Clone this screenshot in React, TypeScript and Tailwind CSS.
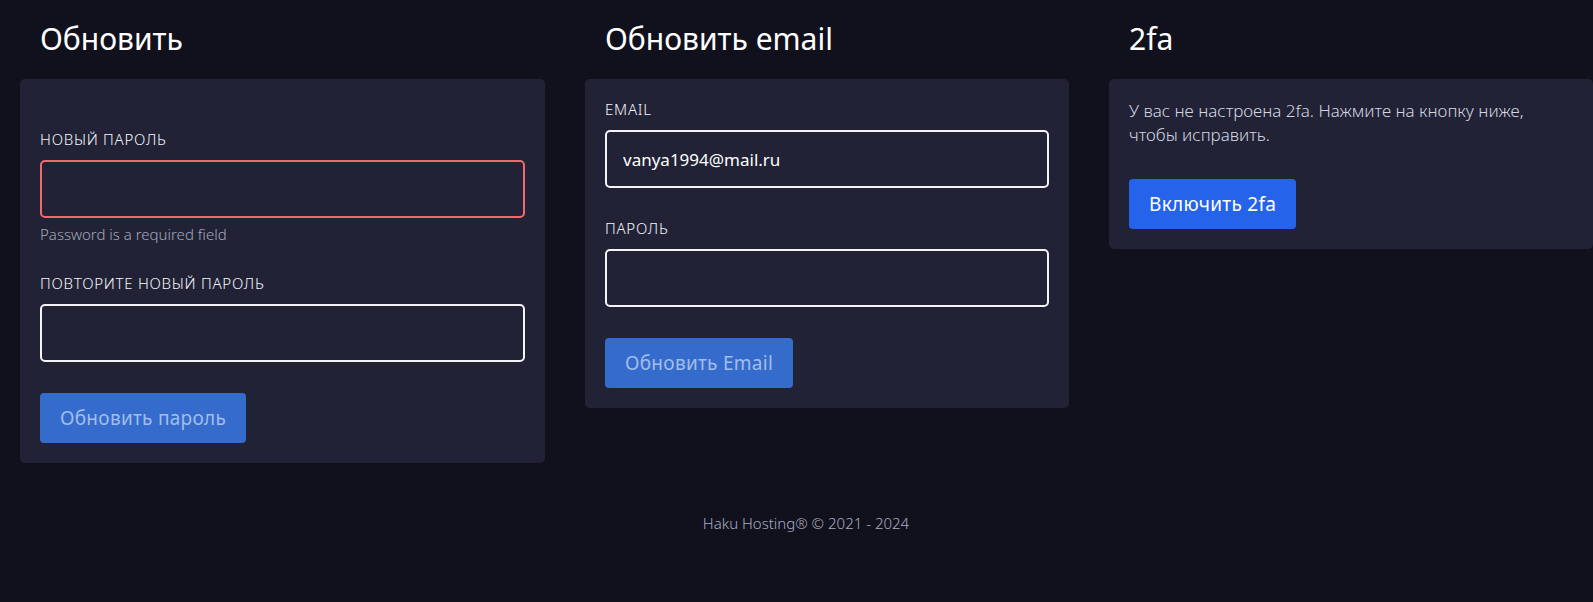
import { useState } from "react";

const font = { fontFamily: '"Noto Sans", "Open Sans", sans-serif' };

const labelCls = "block h-5 mb-[11px] text-[15px] leading-5 uppercase tracking-[0.05em] font-light text-[#f4f5fa]";
const inputCls =
  "block h-[58px] w-full rounded-[5px] border-2 bg-transparent px-4 text-[17px] text-white outline-none";
const mutedBtnCls =
  "h-[50px] rounded-[4px] bg-[#356ccb] px-5 text-[19px] tracking-[0.015em] text-[#a2bdeb]";

export default function App() {
  const [newPass, setNewPass] = useState("");
  const [repeatPass, setRepeatPass] = useState("");
  const [email, setEmail] = useState("vanya1994@mail.ru");
  const [pass, setPass] = useState("");

  return (
    <div className="min-h-screen bg-[#11111d] text-white" style={font}>
      <div className="flex items-start gap-10 pl-5 pt-[19px]">
        {/* Password */}
        <section className="w-[525px] shrink-0">
          <h2 className="h-10 mb-5 pl-5 text-[30px] leading-10 text-white">Обновить</h2>
          <div className="rounded-[5px] bg-[#212235] px-5 pt-[50px] pb-5">
            <label className={labelCls}>Новый пароль</label>
            <input
              type="password"
              value={newPass}
              onChange={(e) => setNewPass(e.target.value)}
              className={`${inputCls} border-[#ef6b6b]`}
            />
            <p className="mt-[6px] mb-[29px] text-[15px] leading-5 font-light text-[#a3a8ba]">
              Password is a required field
            </p>

            <label className={labelCls}>Повторите новый пароль</label>
            <input
              type="password"
              value={repeatPass}
              onChange={(e) => setRepeatPass(e.target.value)}
              className={`${inputCls} border-[#f3f4f8] mb-[31px]`}
            />

            <button type="button" className={mutedBtnCls}>Обновить пароль</button>
          </div>
        </section>

        {/* Email */}
        <section className="w-[484px] shrink-0">
          <h2 className="h-10 mb-5 pl-5 text-[30px] leading-10 text-white">Обновить email</h2>
          <div className="rounded-[5px] bg-[#212235] p-5">
            <label className={labelCls}>Email</label>
            <input
              type="email"
              value={email}
              onChange={(e) => setEmail(e.target.value)}
              className={`${inputCls} border-[#f3f4f8] mb-[30px]`}
            />

            <label className={labelCls}>Пароль</label>
            <input
              type="password"
              value={pass}
              onChange={(e) => setPass(e.target.value)}
              className={`${inputCls} border-[#f3f4f8] mb-[31px]`}
            />

            <button type="button" className={mutedBtnCls}>Обновить Email</button>
          </div>
        </section>

        {/* 2fa */}
        <section className="w-[484px] shrink-0">
          <h2 className="h-10 mb-5 pl-5 text-[30px] leading-10 text-white">2fa</h2>
          <div className="rounded-[5px] bg-[#212235] p-5">
            <p className="mb-8 text-[17px] leading-6 font-light text-[#d3d6e0]">
              У вас не настроена 2fa. Нажмите на кнопку ниже, чтобы исправить.
            </p>
            <button
              type="button"
              className="h-[50px] rounded-[4px] bg-[#2563eb] px-5 text-[19px] tracking-[0.015em] text-white"
            >
              Включить 2fa
            </button>
          </div>
        </section>
      </div>

      <footer className="pt-[50px] pl-[19px] text-center text-[15px] leading-5 font-light text-[#a6adc0]">
        Haku Hosting® © 2021 - 2024
      </footer>
    </div>
  );
}
